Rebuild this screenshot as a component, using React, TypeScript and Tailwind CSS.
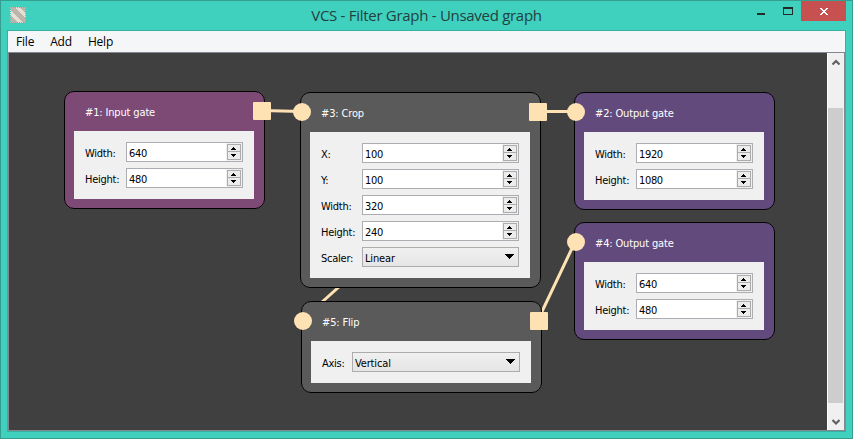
import type { ReactNode } from "react";

type Field = { label: string; value: string; kind?: "spin" | "select" };

const UI = "font-['DejaVu_Sans_Condensed','DejaVu_Sans',sans-serif]";
const SEGOE = "font-['Open_Sans','Noto_Sans',sans-serif]";

function SpinButtons() {
  return (
    <svg width="16" height="18" viewBox="0 0 16 18" shapeRendering="crispEdges" className="shrink-0">
      <rect width="16" height="18" fill="#f0f0f0" />
      <rect x="1.5" y="1.5" width="13" height="15" fill="#ececec" stroke="#acacac" />
      <rect x="2" y="8" width="12" height="1" fill="#acacac" />
      <path d="M7 4h1v1h1v1h1v1H5V6h1V5h1zM5 11h5v1H9v1H8v1H7v-1H6v-1H5z" fill="#000" />
    </svg>
  );
}

function Row({ field, labelWidth }: { field: Field; labelWidth: string }) {
  const select = field.kind === "select";
  return (
    <div className="flex h-5 items-center">
      <span className={`${labelWidth} shrink-0 whitespace-nowrap pt-[3px] pl-px tracking-[-0.25px] text-black`}>
        {field.label}
      </span>
      <div
        className={`flex h-5 min-w-0 flex-1 items-center justify-between border pl-0.5 ${
          select
            ? "border-[#acacac] bg-linear-to-b from-[#f0f0f0] to-[#e5e5e5] pr-[5px]"
            : "border-[#abadb3] bg-white"
        }`}
      >
        <span className={`pt-[3px] text-black ${select ? "tracking-[-0.15px]" : "tracking-[-0.35px]"}`}>
          {field.value}
        </span>
        {select ? (
          <svg width="9" height="5" viewBox="0 0 9 5" className="-mr-px mb-px" shapeRendering="crispEdges">
            <path d="M0 0h9v1H8v1H7v1H6v1H5v1H4V4H3V3H2V2H1V1H0z" />
          </svg>
        ) : (
          <SpinButtons />
        )}
      </div>
    </div>
  );
}

function Port({ shape, side }: { shape: "circle" | "square"; side: "left" | "right" }) {
  return (
    <span
      className={`absolute top-[11px] size-[18px] bg-[#ffe2b3] ${
        shape === "circle" ? "rounded-full" : "rounded-[1px]"
      } ${side === "left" ? "-left-[7px]" : "-right-[6px]"}`}
    />
  );
}

function Node({
  place,
  title,
  labelWidth = "w-[42px]",
  fields,
  children,
}: {
  place: string;
  title: string;
  labelWidth?: string;
  fields: Field[];
  children?: ReactNode;
}) {
  return (
    <section
      className={`absolute rounded-[10px] pr-[11px] pb-2.5 pl-2.5 outline -outline-offset-1 outline-black ${place}`}
    >
      <h2 className="flex h-10 items-center pt-[3px] pl-[11px] text-[11px] tracking-[-0.15px] text-white">{title}</h2>
      <div className="flex flex-col gap-1.5 bg-[#f0f0f0] py-[11px] pr-[11px] pl-2.5">
        {fields.map((f) => (
          <Row key={f.label} field={f} labelWidth={labelWidth} />
        ))}
      </div>
      {children}
    </section>
  );
}

function TitleBar() {
  return (
    <header className="relative flex h-[30px] shrink-0 items-start justify-between">
      <svg width="16" height="16" viewBox="0 0 16 16" className="mt-[6px] ml-[9px]" shapeRendering="crispEdges">
        <rect width="16" height="16" fill="#e6dfd5" />
        <path d="M0 0h4L16 12v4h-2L0 3zM9 0h7v7zM0 8v8h8z" fill="#bbb5aa" />
        <rect x="0.5" y="0.5" width="15" height="15" fill="none" stroke="#40d0be" strokeDasharray="1 1" />
      </svg>
      <h1
        className={`${SEGOE} absolute inset-x-0 top-[3px] text-center text-[15px] leading-[22px] tracking-[-0.29px] text-[#21423f]`}
      >
        VCS - Filter Graph - Unsaved graph
      </h1>
      <div className="relative mr-[6px] flex h-5">
        <svg width="44" height="20" viewBox="0 0 44 20" shapeRendering="crispEdges">
          <path d="M0 12h8v2H0z" fill="#222b2a" />
          <path fillRule="evenodd" d="M26 6h10v8H26zM27 8v5h8V8z" fill="#222b2a" />
        </svg>
        <div className="flex h-5 w-[45px] items-start justify-center bg-[#c75050] pt-[7px]">
          <svg width="8" height="7" viewBox="0 0 8 7" shapeRendering="crispEdges">
            <path
              d="M0 0h2v1h1v1h2V1h1V0h2v1H7v1H6v1H5v1h1v1h1v1h1v1H6V6H5V5H3v1H2v1H0V6h1V5h1V4h1V3H2V2H1V1H0z"
              fill="#fff"
            />
          </svg>
        </div>
      </div>
    </header>
  );
}

function ScrollBar() {
  return (
    <div className="flex w-[17px] shrink-0 flex-col items-center border-l border-white bg-[#f0f0f0]">
      <svg width="16" height="55" viewBox="0 0 16 55" className="shrink-0">
        <path d="M4.5 11.5 8 8l3.5 3.5" fill="none" stroke="#606060" strokeWidth="2.2" />
      </svg>
      <div className="mr-px h-[295px] w-[15px] bg-[#cdcdcd]" />
      <svg width="16" height="27" viewBox="0 0 16 27" className="shrink-0">
        <path d="M4.5 17 8 20.5l3.5-3.5" fill="none" stroke="#606060" strokeWidth="2.2" />
      </svg>
    </div>
  );
}

function Graph() {
  return (
    <div className={`relative min-w-0 flex-1 overflow-hidden bg-[#404040] text-[11px] leading-[14px] ${UI}`}>
      <svg width="818" height="377" viewBox="9 53 818 377" className="absolute inset-0">
        <path
          d="M262 110.5 302 111.5M538 111.5H576M534 112 302 320M537.5 321 575 242"
          stroke="#ffe2b3"
          strokeWidth="3"
        />
      </svg>
      <Node
        place="top-[38px] left-[55px] w-[201px] bg-[#7c4a75]"
        title="#1: Input gate"
        fields={[
          { label: "Width:", value: "640" },
          { label: "Height:", value: "480" },
        ]}
      >
        <Port shape="square" side="right" />
      </Node>
      <Node
        place="top-[39px] left-[291px] w-[241px] bg-[#5a5a5a]"
        title="#3: Crop"
        fields={[
          { label: "X:", value: "100" },
          { label: "Y:", value: "100" },
          { label: "Width:", value: "320" },
          { label: "Height:", value: "240" },
          { label: "Scaler:", value: "Linear", kind: "select" },
        ]}
      >
        <Port shape="circle" side="left" />
        <Port shape="square" side="right" />
      </Node>
      <Node
        place="top-[39px] left-[565px] w-[201px] bg-[#634a7c]"
        title="#2: Output gate"
        fields={[
          { label: "Width:", value: "1920" },
          { label: "Height:", value: "1080" },
        ]}
      >
        <Port shape="circle" side="left" />
      </Node>
      <Node
        place="top-[169px] left-[565px] w-[201px] bg-[#634a7c]"
        title="#4: Output gate"
        fields={[
          { label: "Width:", value: "640" },
          { label: "Height:", value: "480" },
        ]}
      >
        <Port shape="circle" side="left" />
      </Node>
      <Node
        place="top-[248px] left-[292px] w-[241px] bg-[#5a5a5a]"
        title="#5: Flip"
        labelWidth="w-[31px]"
        fields={[{ label: "Axis:", value: "Vertical", kind: "select" }]}
      >
        <Port shape="circle" side="left" />
        <Port shape="square" side="right" />
      </Node>
    </div>
  );
}

export default function App() {
  return (
    <div className="flex h-[439px] w-[853px] flex-col overflow-hidden border border-[#369e90] bg-[#40d0be]">
      <TitleBar />
      <main className="mx-[6px] -mt-px mb-[6px] flex min-h-0 flex-1 flex-col border border-[#36b1a1]">
        <nav
          className={`${SEGOE} flex h-[21px] shrink-0 items-center gap-4 bg-[#f5f6f7] pl-2 text-[12px] leading-4 tracking-[-0.2px] text-black`}
        >
          <span>File</span>
          <span>Add</span>
          <span>Help</span>
        </nav>
        <div className="flex min-h-0 flex-1 border border-[#828790]">
          <Graph />
          <ScrollBar />
        </div>
      </main>
    </div>
  );
}
